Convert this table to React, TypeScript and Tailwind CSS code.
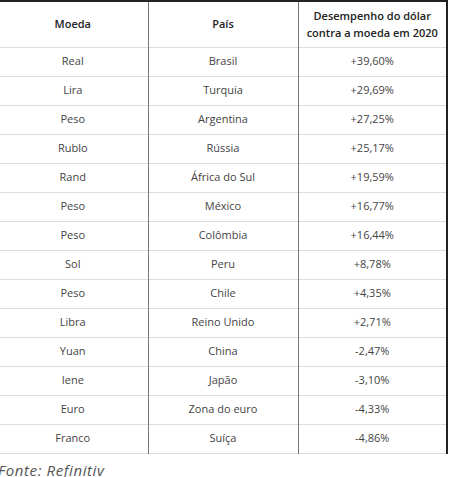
const rows: [string, string, string][] = [
  ["Real", "Brasil", "+39,60%"],
  ["Lira", "Turquia", "+29,69%"],
  ["Peso", "Argentina", "+27,25%"],
  ["Rublo", "Rússia", "+25,17%"],
  ["Rand", "África do Sul", "+19,59%"],
  ["Peso", "México", "+16,77%"],
  ["Peso", "Colômbia", "+16,44%"],
  ["Sol", "Peru", "+8,78%"],
  ["Peso", "Chile", "+4,35%"],
  ["Libra", "Reino Unido", "+2,71%"],
  ["Yuan", "China", "-2,47%"],
  ["Iene", "Japão", "-3,10%"],
  ["Euro", "Zona do euro", "-4,33%"],
  ["Franco", "Suíça", "-4,86%"],
];

export default function App() {
  return (
    <div className="w-[450px] h-[477px] overflow-hidden bg-white" style={{ fontFamily: "'Open Sans', 'Liberation Sans', sans-serif" }}>
      <table className="-ml-[2px] w-[450px] table-fixed border-collapse border-t-2 border-r-2 border-t-[#222] border-r-[#222]">
        <thead>
          <tr className="h-[46px] border-b border-[#dcdcdc]">
            <th className="w-[150px] text-[11px] font-semibold text-[#222] border-r border-[#777]">Moeda</th>
            <th className="w-[150px] text-[11px] font-semibold text-[#222] border-r border-[#777]">País</th>
            <th className="text-[11px] font-semibold text-[#222] leading-[17px]">
              Desempenho do dólar
              <br />
              contra a moeda em 2020
            </th>
          </tr>
        </thead>
        <tbody>
          {rows.map(([moeda, pais, valor], i) => (
            <tr key={i} className="h-[29px] border-b border-[#dcdcdc]">
              <td className="text-center text-[11px] text-[#444] border-r border-[#777]">{moeda}</td>
              <td className="text-center text-[11px] text-[#444] border-r border-[#777]">{pais}</td>
              <td className="text-center text-[11px] text-[#444]">{valor}</td>
            </tr>
          ))}
        </tbody>
      </table>
      <p className="mt-[6px] -ml-[2px] text-[15px] italic tracking-[0.6px] text-[#555] leading-[20px]">Fonte: Refinitiv</p>
    </div>
  );
}
